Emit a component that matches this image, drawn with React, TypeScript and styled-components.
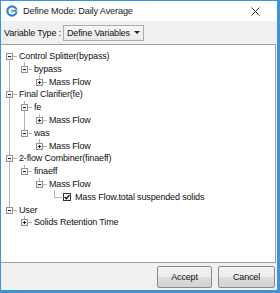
import React from 'react';
import styled, { createGlobalStyle } from 'styled-components';

const GlobalStyle = createGlobalStyle`
  html, body {
    margin: 0;
    padding: 0;
    background: #ffffff;
  }
  * {
    box-sizing: border-box;
  }
`;

const INDENT = 15;
const ROW_H = 12.8;

type Node = {
  label: string;
  expanded?: boolean;
  checkbox?: boolean;
  children?: Node[];
};

const tree: Node[] = [
  {
    label: 'Control Splitter(bypass)',
    expanded: true,
    children: [{ label: 'bypass', expanded: true, children: [{ label: 'Mass Flow', children: [{ label: 'x' }] }] }],
  },
  {
    label: 'Final Clarifier(fe)',
    expanded: true,
    children: [
      { label: 'fe', expanded: true, children: [{ label: 'Mass Flow', children: [{ label: 'x' }] }] },
      { label: 'was', expanded: true, children: [{ label: 'Mass Flow', children: [{ label: 'x' }] }] },
    ],
  },
  {
    label: '2-flow Combiner(finaeff)',
    expanded: true,
    children: [
      {
        label: 'finaeff',
        expanded: true,
        children: [
          {
            label: 'Mass Flow',
            expanded: true,
            children: [{ label: 'Mass Flow.total suspended solids', checkbox: true }],
          },
        ],
      },
    ],
  },
  {
    label: 'User',
    expanded: true,
    children: [{ label: 'Solids Retention Time', children: [{ label: 'x' }] }],
  },
];

type Row = {
  node: Node;
  guides: boolean[];
  isLast: boolean;
  isFirstRoot: boolean;
};

const flatten = (nodes: Node[], guides: boolean[], out: Row[]) => {
  nodes.forEach((node, i) => {
    const isLast = i === nodes.length - 1;
    out.push({ node, guides, isLast, isFirstRoot: guides.length === 0 && i === 0 });
    if (node.expanded && node.children) {
      flatten(node.children, [...guides, !isLast], out);
    }
  });
  return out;
};

const Window = styled.div`
  width: 280px;
  height: 293px;
  display: flex;
  flex-direction: column;
  background: #f0f0f0;
  border: 1px solid #3c95dc;
  border-right-width: 3px;
  border-bottom-width: 3px;
  font-family: 'Segoe UI', 'Liberation Sans', Arial, sans-serif;
  font-size: 9px;
  letter-spacing: -0.15px;
  color: #111;
`;

const TitleBar = styled.div`
  height: 20px;
  flex: none;
  display: flex;
  align-items: center;
  background: #ffffff;
  padding-left: 5px;
  padding-right: 17px;
  gap: 5px;
`;

const TitleText = styled.span`
  flex: 1;
  font-size: 9.2px;
  color: #222;
`;

const Toolbar = styled.div`
  height: 23px;
  flex: none;
  display: flex;
  align-items: center;
  gap: 2px;
  padding-left: 3px;
`;

const Select = styled.div`
  width: 81px;
  height: 16px;
  display: flex;
  align-items: center;
  justify-content: space-between;
  padding: 0 3px 0 3px;
  border: 1px solid #acacac;
  background: linear-gradient(#f7f7f7, #e9e9e9);
`;

const Arrow = styled.span`
  width: 0;
  height: 0;
  border-left: 3px solid transparent;
  border-right: 3px solid transparent;
  border-top: 3px solid #222;
`;

const TreeBox = styled.div`
  flex: 1;
  background: #ffffff;
  border-top: 1px solid #a0a0a0;
  border-right: 1px solid #a0a0a0;
  border-bottom: 1px solid #a0a0a0;
  margin-right: 1px;
  padding: 4.6px 0 0 1px;
`;

const TreeRow = styled.div`
  height: ${ROW_H}px;
  display: flex;
  align-items: stretch;
`;

const Guide = styled.div<{ $line: boolean }>`
  width: ${INDENT}px;
  flex: none;
  position: relative;
  &::before {
    content: '';
    display: ${({ $line }) => ($line ? 'block' : 'none')};
    position: absolute;
    left: 7px;
    top: 0;
    bottom: 0;
    border-left: 1px solid #b4b4b4;
  }
`;

const Connector = styled.div<{ $top: boolean; $bottom: boolean }>`
  width: ${INDENT}px;
  flex: none;
  position: relative;
  &::before {
    content: '';
    position: absolute;
    left: 7px;
    top: ${({ $top }) => ($top ? '0' : '50%')};
    bottom: ${({ $bottom }) => ($bottom ? '0' : '50%')};
    border-left: 1px solid #b4b4b4;
  }
  &::after {
    content: '';
    position: absolute;
    left: 7px;
    right: 0;
    top: 50%;
    border-top: 1px solid #b4b4b4;
  }
`;

const Expander = styled.div<{ $open: boolean }>`
  position: absolute;
  z-index: 1;
  left: 4px;
  top: calc(50% - 3px);
  width: 7px;
  height: 7px;
  border: 1px solid #939393;
  background: linear-gradient(#ffffff, #e8e8e8);
  &::before {
    content: '';
    position: absolute;
    left: 1px;
    right: 1px;
    top: 2px;
    border-top: 1px solid #222;
  }
  &::after {
    content: '';
    display: ${({ $open }) => ($open ? 'none' : 'block')};
    position: absolute;
    top: 1px;
    bottom: 1px;
    left: 2px;
    border-left: 1px solid #222;
  }
`;

const CheckBox = styled.div`
  width: 8px;
  height: 8px;
  flex: none;
  align-self: center;
  margin-left: 1px;
  border: 1px solid #333;
  background: #fff;
  display: flex;
  align-items: center;
  justify-content: center;
`;

const Label = styled.span`
  display: flex;
  align-items: center;
  padding-left: 2px;
  white-space: nowrap;
`;

const CheckLabel = styled(Label)`
  padding-left: 4px;
`;

const Footer = styled.div`
  height: 27px;
  flex: none;
  display: flex;
  align-items: center;
  justify-content: flex-end;
  gap: 6px;
  padding-right: 2px;
`;

const Button = styled.button<{ $w: number }>`
  width: ${({ $w }) => $w}px;
  height: 22px;
  padding: 0;
  border: 1px solid #8a8a8a;
  border-radius: 2px;
  background: linear-gradient(#f4f4f4 0%, #ececec 50%, #dddddd 51%, #d2d2d2 100%);
  font-family: inherit;
  font-size: 9px;
  letter-spacing: -0.15px;
  color: #111;
`;

const AppIcon = () => (
  <svg width="12" height="12" viewBox="0 0 12 12">
    <circle cx="6" cy="6" r="4.6" fill="none" stroke="#2f7fd0" strokeWidth="2.2" />
    <rect x="6" y="4.6" width="5.5" height="2.4" fill="#ffffff" />
    <path d="M6.5 5.8 H10.6" stroke="#555" strokeWidth="1.4" />
    <circle cx="6" cy="6" r="1.6" fill="#8fb8e0" />
  </svg>
);

const CloseIcon = () => (
  <svg width="9" height="9" viewBox="0 0 9 9">
    <path d="M0.5 0.5 L8.5 8.5 M8.5 0.5 L0.5 8.5" stroke="#333" strokeWidth="1" />
  </svg>
);

const Check = () => (
  <svg width="6" height="6" viewBox="0 0 7 7">
    <path d="M0.8 3.6 L2.7 5.5 L6.3 1.3" fill="none" stroke="#111" strokeWidth="1.6" />
  </svg>
);

const App: React.FC = () => {
  const rows = flatten(tree, [], []);

  return (
    <>
      <GlobalStyle />
      <Window>
        <TitleBar>
          <AppIcon />
          <TitleText>Define Mode: Daily Average</TitleText>
          <CloseIcon />
        </TitleBar>
        <Toolbar>
          <span>Variable Type :</span>
          <Select>
            <span>Define Variables</span>
            <Arrow />
          </Select>
        </Toolbar>
        <TreeBox>
          {rows.map((row, i) => (
            <TreeRow key={i}>
              {row.guides.map((g, j) => (
                <Guide key={j} $line={g} />
              ))}
              <Connector $top={!row.isFirstRoot} $bottom={!row.isLast}>
                {row.node.children && !row.node.checkbox && <Expander $open={!!row.node.expanded} />}
              </Connector>
              {row.node.checkbox ? (
                <>
                  <CheckBox>
                    <Check />
                  </CheckBox>
                  <CheckLabel>{row.node.label}</CheckLabel>
                </>
              ) : (
                <Label>{row.node.label}</Label>
              )}
            </TreeRow>
          ))}
        </TreeBox>
        <Footer>
          <Button $w={55}>Accept</Button>
          <Button $w={57}>Cancel</Button>
        </Footer>
      </Window>
    </>
  );
};

export default App;
